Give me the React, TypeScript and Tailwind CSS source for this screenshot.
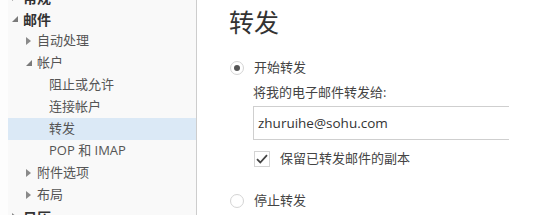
import React from 'react'

const font = { fontFamily: '"Open Sans", "Noto Sans CJK SC", sans-serif' }

function Expanded() {
  return (
    <svg width="6" height="6" viewBox="0 0 6 6" className="shrink-0">
      <path d="M6 0 L6 6 L0 6 Z" fill="#7a7a7a" />
    </svg>
  )
}

function Collapsed() {
  return (
    <svg width="5" height="8" viewBox="0 0 5 8" className="shrink-0">
      <path d="M0 0 L5 4 L0 8 Z" fill="#8a8a8a" />
    </svg>
  )
}

type Item = { label: string; level: number; icon?: 'open' | 'closed'; bold?: boolean; active?: boolean }

const items: Item[] = [
  { label: '常规', level: 0, icon: 'closed', bold: true },
  { label: '邮件', level: 0, icon: 'open', bold: true },
  { label: '自动处理', level: 1, icon: 'closed' },
  { label: '帐户', level: 1, icon: 'open' },
  { label: '阻止或允许', level: 2 },
  { label: '连接帐户', level: 2 },
  { label: '转发', level: 2, active: true },
  { label: 'POP 和 IMAP', level: 2 },
  { label: '附件选项', level: 1, icon: 'closed' },
  { label: '布局', level: 1, icon: 'closed' },
  { label: '日历', level: 0, icon: 'closed', bold: true },
]

export default function App() {
  return (
    <div className="w-[560px] h-[215px] overflow-hidden flex bg-white" style={font}>
      <div className="w-[8px] shrink-0 bg-[#fdfdfd]" />
      <div className="w-[189px] shrink-0 bg-[#f9f9f9] border-r border-[#cdcdcd]">
        <div className="mt-[-14px]">
          {items.map((it, i) => (
            <div
              key={i}
              className={`h-[22px] flex items-center ${it.active ? 'bg-[#dbe9f6]' : ''}`}
            >
              <div
                className={`flex items-center ${it.level === 0 ? 'pl-[4px]' : it.level === 1 ? 'pl-[18px]' : 'pl-[41px]'}`}
              >
                {it.icon === 'open' && <span className="w-[11px] flex items-center"><Expanded /></span>}
                {it.icon === 'closed' && <span className="w-[11px] flex items-center"><Collapsed /></span>}
                <span
                  className={
                    it.bold
                      ? 'text-[14px] font-bold text-[#333]'
                      : 'text-[13px] text-[#555]'
                  }
                >
                  {it.label}
                </span>
              </div>
            </div>
          ))}
        </div>
      </div>
      <div className="flex-1 pt-[10px] pl-[32px] text-[#444]">
        <div className="text-[25px] leading-[25px] text-[#333]">转发</div>
        <div className="mt-[23px] h-[20px] flex items-center">
          <span className="ml-[1px] w-[14px] h-[14px] rounded-full border border-[#d4d4d4] flex items-center justify-center">
            <span className="w-[6px] h-[6px] rounded-full bg-[#555]" />
          </span>
          <span className="ml-[10px] text-[13px]">开始转发</span>
        </div>
        <div className="pl-[24px]">
          <div className="mt-[5px] h-[20px] flex items-center text-[13px]">将我的电子邮件转发给:</div>
          <div className="mt-[3px] h-[34px] w-[256px] border border-r-0 border-[#cfcfcf] flex items-center pl-[4px] text-[13.5px] text-[#333]">
            zhuruihe@sohu.com
          </div>
          <div className="mt-[9px] h-[20px] flex items-center">
            <span className="ml-[1px] w-[16px] h-[16px] border border-[#d4d4d4] flex items-center justify-center">
              <svg width="12" height="10" viewBox="0 0 12 10">
                <path d="M1 5.2 L4.3 8.5 L11 1.2" fill="none" stroke="#444" strokeWidth="1.8" />
              </svg>
            </span>
            <span className="ml-[10px] text-[13px]">保留已转发邮件的副本</span>
          </div>
        </div>
        <div className="mt-[22px] h-[20px] flex items-center">
          <span className="ml-[1px] w-[14px] h-[14px] rounded-full border border-[#d4d4d4]" />
          <span className="ml-[10px] text-[13px]">停止转发</span>
        </div>
      </div>
    </div>
  )
}
